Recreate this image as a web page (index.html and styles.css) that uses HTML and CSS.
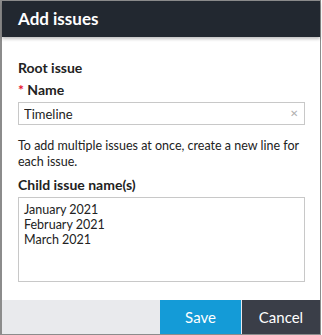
FILE: index.html
```html
<!DOCTYPE html>
<html lang="en">
  <head>
    <meta charset="UTF-8" />
    <title>Add issues</title>
    <link rel="stylesheet" href="styles.css">
  </head>
  <body>
    <div class="dialog">
      <div class="dialog-header">Add issues</div>

      <div class="dialog-body">
        <div class="section-title">Root issue</div>
        <label class="field-label" for="name"><span class="required">*</span> Name</label>
        <div class="input-wrap">
          <input type="text" id="name" value="Timeline" />
          <span class="clear">&#x2715;</span>
        </div>

        <p class="hint">To add multiple issues at once, create a new line for each issue.</p>

        <label class="field-label" for="children">Child issue name(s)</label>
        <textarea id="children">January 2021
February 2021
March 2021</textarea>
      </div>

      <div class="dialog-footer">
        <button class="btn btn-save">Save</button>
        <button class="btn btn-cancel">Cancel</button>
      </div>
    </div>
  </body>
</html>
```

FILE: styles.css
```css
body {
  margin: 0;
  padding: 0;
  font-family: Lato, sans-serif;
  color: #222;
}

.dialog {
  width: 321px;
  height: 335px;
  box-sizing: border-box;
  border: 1px solid #8c8c8c;
  border-left-width: 2px;
  display: flex;
  flex-direction: column;
  background: #fff;
}

.dialog-header {
  height: 36px;
  flex-shrink: 0;
  background-color: #222830;
  color: #fff;
  font-size: 17px;
  font-weight: 700;
  line-height: 35px;
  padding-left: 16px;
  box-shadow: 0 2px 3px rgba(0, 0, 0, 0.25);
}

.dialog-body {
  flex: 1;
  padding: 22px 15px 0 16px;
}

.section-title {
  font-size: 14px;
  font-weight: 700;
  line-height: 18px;
  margin-bottom: 4px;
}

.field-label {
  display: block;
  font-size: 14px;
  font-weight: 700;
  line-height: 18px;
  margin-bottom: 3px;
}

.required {
  color: #e8112d;
}

.input-wrap {
  position: relative;
}

input[type="text"] {
  display: block;
  width: 100%;
  box-sizing: border-box;
  height: 23px;
  border: 1px solid #c8c8c8;
  padding: 0 20px 0 5px;
  font-family: inherit;
  font-size: 13px;
  color: #222;
  outline: none;
}

.clear {
  position: absolute;
  right: 7px;
  top: 5px;
  font-size: 10px;
  color: #b0b0b0;
}

.hint {
  font-size: 12.5px;
  line-height: 16px;
  margin: 13px 0 6px;
}

textarea {
  display: block;
  width: 100%;
  box-sizing: border-box;
  height: 85px;
  margin-top: 3px;
  border: 1px solid #c8c8c8;
  padding: 4px 5px;
  font-family: inherit;
  font-size: 12.5px;
  line-height: 15px;
  color: #222;
  resize: none;
  outline: none;
}

.dialog-footer {
  height: 34px;
  flex-shrink: 0;
  display: flex;
  justify-content: flex-end;
  background-color: #e9eaed;
}

.btn {
  border: none;
  font-family: inherit;
  font-size: 15px;
  color: #fff;
  width: 81px;
  cursor: pointer;
}

.btn-save {
  background-color: #149bd7;
  margin-right: 1px;
}

.btn-cancel {
  background-color: #3a3e48;
  width: 78px;
}
```
